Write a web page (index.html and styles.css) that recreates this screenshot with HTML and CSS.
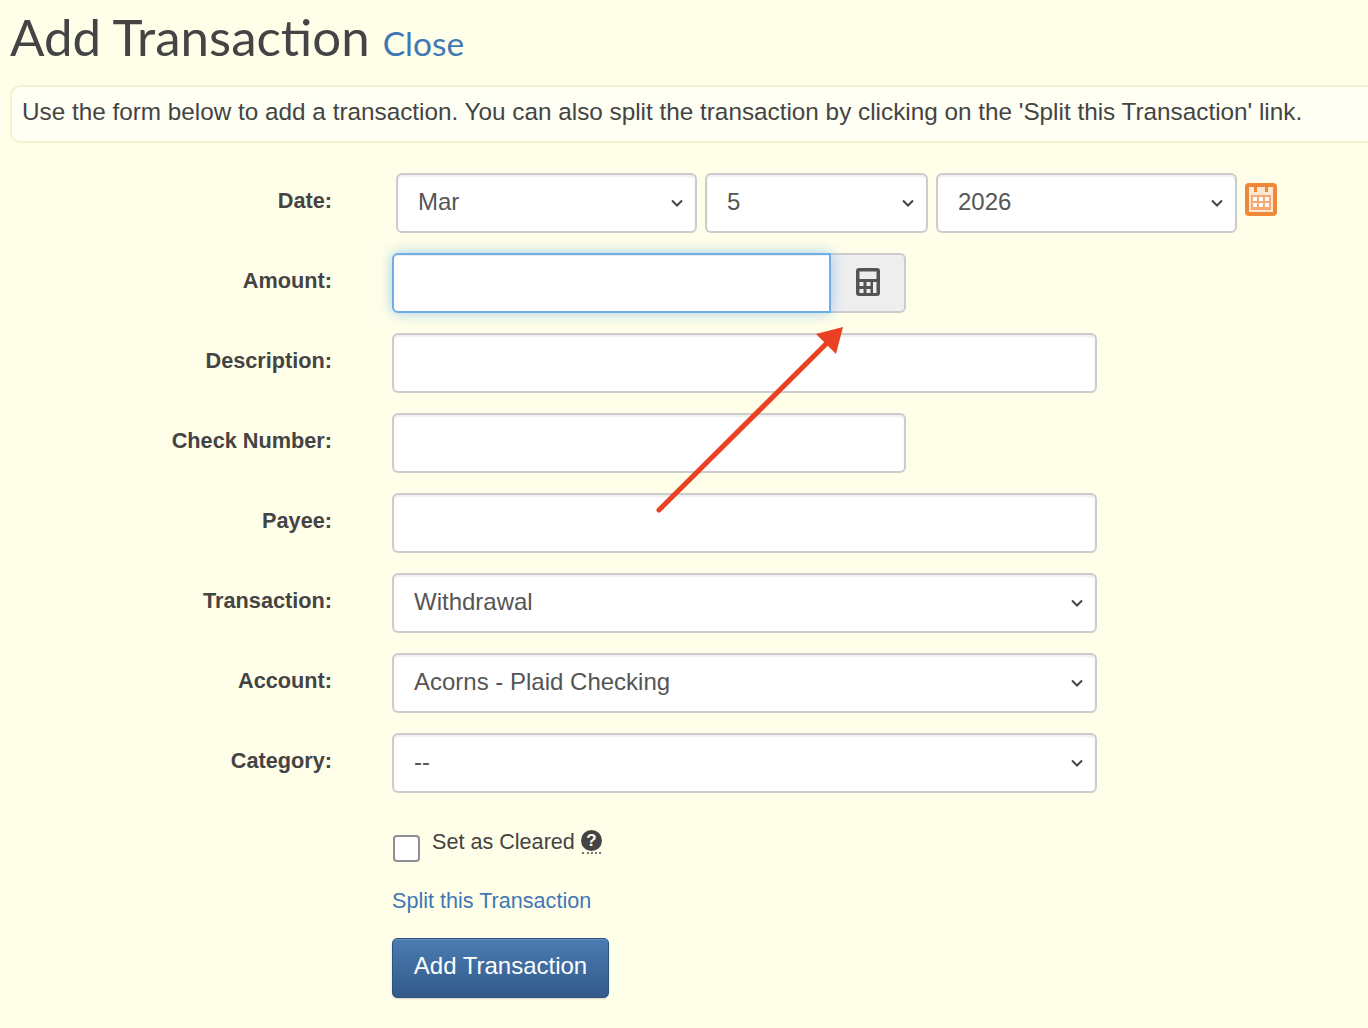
FILE: index.html
```html
<!DOCTYPE html>
<html lang="en">
<head>
  <meta charset="UTF-8">
  <title>Add Transaction</title>
  <link rel="stylesheet" href="styles.css">
</head>
<body>

  <h1>Add Transaction <a href="#" class="close-link">Close</a></h1>

  <div class="alert">Use the form below to add a transaction. You can also split the transaction by clicking on the 'Split this Transaction' link.</div>

  <form class="tx-form">
    <div class="row">
      <label>Date:</label>
      <div class="date-fields">
        <select class="sel-month"><option>Mar</option></select>
        <select class="sel-day"><option>5</option></select>
        <select class="sel-year"><option>2026</option></select>
        <svg class="cal-icon" viewBox="0 0 32 33" width="32" height="33">
          <rect width="32" height="33" rx="4" fill="#f0883a"/>
          <path d="M5 5h5v-2h3v6h-3v-2M13 5h6v-2h0M5 5h22v24h-22z" fill="none"/>
          <path fill-rule="evenodd" fill="#fde6d2" d="M4 4h5v5h3v-5h8v5h3v-5h5v25h-24zM6 12v15h20v-15z"/>
          <rect x="6" y="12" width="20" height="15" fill="#f6aa72"/>
          <g fill="#fff">
            <rect x="8" y="14" width="4" height="4"/><rect x="14" y="14" width="4" height="4"/><rect x="20" y="14" width="4" height="4"/>
            <rect x="8" y="20" width="4" height="4"/><rect x="14" y="20" width="4" height="4"/><rect x="20" y="20" width="4" height="4"/>
          </g>
        </svg>
      </div>
    </div>

    <div class="row">
      <label>Amount:</label>
      <div class="input-group">
        <input type="text" class="amount-input">
        <span class="addon">
          <svg viewBox="0 0 24 28" width="24" height="28">
            <path fill-rule="evenodd" fill="#555" d="M3 0h18a3 3 0 0 1 3 3v22a3 3 0 0 1-3 3H3a3 3 0 0 1-3-3V3a3 3 0 0 1 3-3zM3.500 3.500v7.500h17v-7.500zM3.500 14v4h4v-4zM10.500 14v4h4v-4zM17 14v11h3.500v-11zM3.500 21v4h4v-4zM10.500 21v4h4v-4z"/>
          </svg>
        </span>
      </div>
    </div>

    <div class="row">
      <label>Description:</label>
      <input type="text" class="wide">
    </div>

    <div class="row">
      <label>Check Number:</label>
      <input type="text" class="medium">
    </div>

    <div class="row">
      <label>Payee:</label>
      <input type="text" class="wide">
    </div>

    <div class="row">
      <label>Transaction:</label>
      <select class="wide"><option>Withdrawal</option></select>
    </div>

    <div class="row">
      <label>Account:</label>
      <select class="wide"><option>Acorns - Plaid Checking</option></select>
    </div>

    <div class="row">
      <label>Category:</label>
      <select class="wide"><option>--</option></select>
    </div>

    <div class="cleared">
      <span class="check-box"></span>
      <span class="cleared-text">Set as Cleared</span>
      <span class="help-icon">?</span>
    </div>

    <a href="#" class="split-link">Split this Transaction</a>

    <button type="button" class="btn-add">Add Transaction</button>
  </form>

  <!-- annotation drawn on top of the screenshot -->
  <svg class="arrow" width="1368" height="1028" viewBox="0 0 1368 1028">
    <line x1="659" y1="510" x2="830" y2="340" stroke="#ea4023" stroke-width="5" stroke-linecap="round"/>
    <polygon points="843,327 836,354 816,334" fill="#ea4023"/>
  </svg>

</body>
</html>
```

FILE: styles.css
```css
html, body {
  margin: 0;
  height: 1028px;
  overflow: hidden;
}
body {
  position: relative;
  background-color: #fffee9;
  font-family: "Liberation Sans", Arial, sans-serif;
  font-size: 24.3px;
  color: #444;
  padding-left: 10px;
  box-sizing: border-box;
}
h1 {
  margin: 0;
  height: 85px;
  line-height: 73px;
  font-family: Lato, "Open Sans", sans-serif;
  font-size: 51px;
  font-weight: 400;
  color: #444;
  white-space: nowrap;
}
.close-link {
  margin-left: 0;
  font-size: 33.5px;
  color: #3f78b5;
  text-decoration: none;
}
.alert {
  width: 1400px;
  height: 58px;
  line-height: 50px;
  box-sizing: border-box;
  padding-left: 10px;
  background-color: #fffff4;
  border: 2px solid #f4f1cf;
  border-radius: 10px;
  white-space: nowrap;
}
.tx-form {
  margin-top: 30px;
}
.row {
  display: flex;
  align-items: flex-start;
  height: 60px;
  margin-bottom: 20px;
}
.row label {
  width: 322px;
  margin-right: 60px;
  flex-shrink: 0;
  text-align: right;
  font-size: 21.7px;
  font-weight: bold;
  line-height: 55px;
}
input, select {
  height: 60px;
  box-sizing: border-box;
  border: 2px solid #ccc;
  border-radius: 6px;
  background-color: #fff;
  color: #555;
  font-family: inherit;
  font-size: 24px;
  padding: 0 20px 4px;
  box-shadow: inset 0 2px 2px rgba(0, 0, 0, 0.07);
  outline: none;
}
select {
  appearance: none;
  -webkit-appearance: none;
  background-image: url("data:image/svg+xml,%3Csvg xmlns='http://www.w3.org/2000/svg' width='12' height='8' viewBox='0 0 12 8'%3E%3Cpath d='M1 1.500l5 5 5-5' fill='none' stroke='%23444' stroke-width='2'/%3E%3C/svg%3E");
  background-repeat: no-repeat;
  background-position: right 12px center;
}
.wide {
  width: 705px;
}
.medium {
  width: 514px;
}
.date-fields {
  display: flex;
  gap: 8px;
  margin-left: 4px;
}
.sel-month, .sel-year {
  width: 301px;
}
.sel-day {
  width: 223px;
}
.cal-icon {
  margin-top: 10px;
}
.input-group {
  display: flex;
}
.amount-input {
  width: 439px;
  border-color: #6daee8;
  border-radius: 6px 0 0 6px;
  box-shadow: inset 0 1px 1px rgba(0, 0, 0, 0.07), 0 0 14px rgba(102, 175, 233, 0.6);
  position: relative;
  z-index: 1;
}
.addon {
  display: flex;
  align-items: center;
  justify-content: center;
  width: 75px;
  height: 60px;
  padding: 0 0 3px;
  box-sizing: border-box;
  background-color: #eee;
  border: 2px solid #ccc;
  border-left: none;
  border-radius: 0 6px 6px 0;
}
.cleared {
  display: flex;
  align-items: flex-start;
  height: 53px;
  margin-left: 383px;
  margin-top: 40px;
  font-size: 21.6px;
}
.check-box {
  width: 27px;
  height: 27px;
  margin-top: 2px;
  box-sizing: border-box;
  background-color: #fff;
  border: 2px solid #8e8e96;
  border-radius: 4px;
}
.cleared-text {
  margin-left: 12px;
  margin-top: -4px;
}
.help-icon {
  width: 21px;
  height: 21px;
  margin-left: 6px;
  margin-top: -3px;
  border-radius: 50%;
  background-color: #444;
  color: #fffee9;
  font-size: 17px;
  font-weight: bold;
  line-height: 21px;
  text-align: center;
  position: relative;
}
.help-icon::after {
  content: "";
  position: absolute;
  left: 1px;
  right: 1px;
  top: 22px;
  border-bottom: 2px dotted #777;
}
.split-link {
  display: block;
  margin-left: 382px;
  font-size: 21.6px;
  line-height: 30px;
  color: #3f78b5;
  text-decoration: none;
}
.btn-add {
  display: block;
  width: 217px;
  height: 60px;
  margin: 22px 0 0 382px;
  padding: 0 0 4px;
  border: 1px solid #2d5480;
  border-radius: 5px;
  background: linear-gradient(#4a7cb2, #335a8a);
  box-shadow: inset 0 1px 0 rgba(255, 255, 255, 0.15), 0 1px 2px rgba(0, 0, 0, 0.15);
  color: #fff;
  font-family: inherit;
  font-size: 24px;
}
.arrow {
  position: absolute;
  left: 0;
  top: 0;
  pointer-events: none;
  z-index: 2;
}
```
